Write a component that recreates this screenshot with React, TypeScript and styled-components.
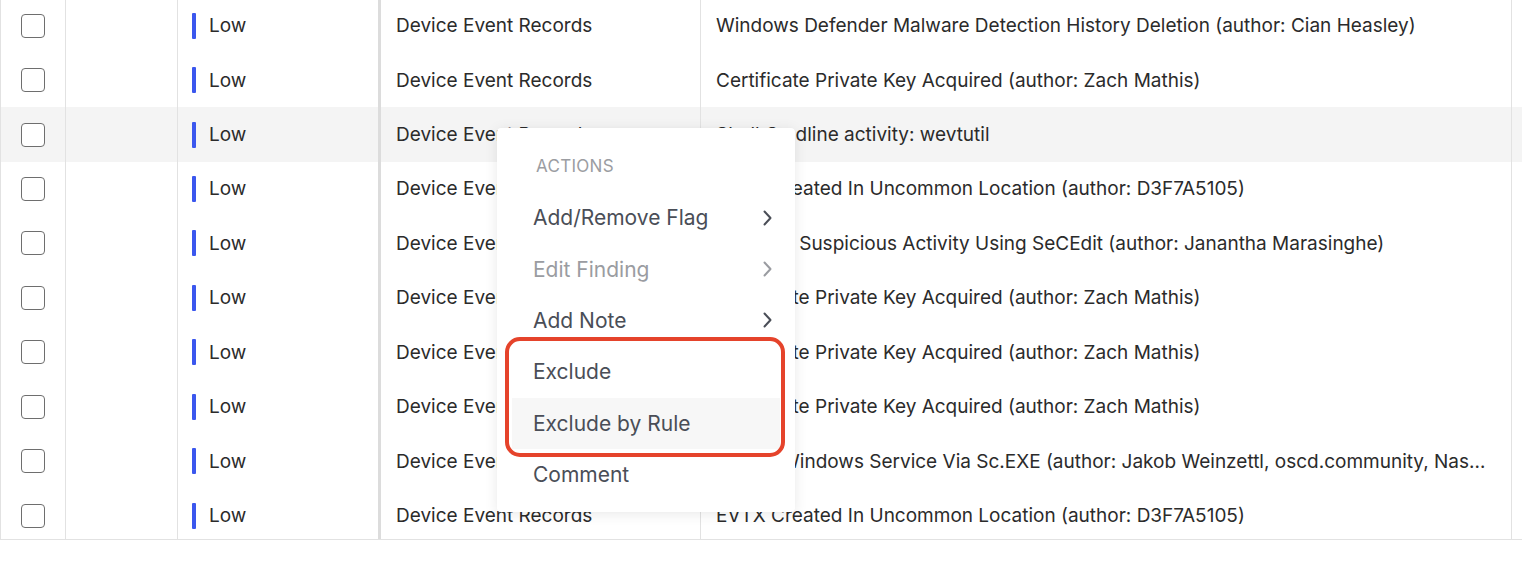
import styled, { createGlobalStyle } from 'styled-components';

const GlobalStyle = createGlobalStyle`
  html, body {
    margin: 0;
    padding: 0;
    background: #ffffff;
    overflow: hidden;
  }
  body {
    font-family: Inter, "Noto Sans", "Liberation Sans", sans-serif;
    -webkit-font-smoothing: antialiased;
  }
`;

type Finding = {
  severity: string;
  source: string;
  title: string;
};

const rows: Finding[] = [
  { severity: 'Low', source: 'Device Event Records', title: 'Windows Defender Malware Detection History Deletion (author: Cian Heasley)' },
  { severity: 'Low', source: 'Device Event Records', title: 'Certificate Private Key Acquired (author: Zach Mathis)' },
  { severity: 'Low', source: 'Device Event Records', title: 'Shell Cmdline activity: wevtutil' },
  { severity: 'Low', source: 'Device Event Records', title: 'EVTX Created In Uncommon Location (author: D3F7A5105)' },
  { severity: 'Low', source: 'Device Event Records', title: 'Potential Suspicious Activity Using SeCEdit (author: Janantha Marasinghe)' },
  { severity: 'Low', source: 'Device Event Records', title: 'Certificate Private Key Acquired (author: Zach Mathis)' },
  { severity: 'Low', source: 'Device Event Records', title: 'Certificate Private Key Acquired (author: Zach Mathis)' },
  { severity: 'Low', source: 'Device Event Records', title: 'Certificate Private Key Acquired (author: Zach Mathis)' },
  { severity: 'Low', source: 'Device Event Records', title: 'Create Windows Service Via Sc.EXE (author: Jakob Weinzettl, oscd.community, Nasreddine Bencherchali)' },
  { severity: 'Low', source: 'Device Event Records', title: 'EVTX Created In Uncommon Location (author: D3F7A5105)' },
];

const menuItems = [
  { label: 'Add/Remove Flag', sub: true, disabled: false },
  { label: 'Edit Finding', sub: true, disabled: true },
  { label: 'Add Note', sub: true, disabled: false },
  { label: 'Exclude', sub: false, disabled: false },
  { label: 'Exclude by Rule', sub: false, disabled: false, hover: true },
  { label: 'Comment', sub: false, disabled: false },
];

const Chevron = ({ muted }: { muted?: boolean }) => (
  <svg width="11" height="16" viewBox="0 0 11 16" fill="none">
    <path
      d="M2.5 1.5 L8.5 8 L2.5 14.5"
      stroke={muted ? '#9a9ca1' : '#4a4e57'}
      strokeWidth="2"
      strokeLinecap="round"
      strokeLinejoin="round"
    />
  </svg>
);

const App = () => {
  return (
    <>
      <GlobalStyle />
      <Page>
        <Scroller>
          <Table>
            {rows.map((r, i) => (
              <Row key={i} $active={i === 2}>
                <CheckCell>
                  <Checkbox />
                </CheckCell>
                <Cell />
                <SeverityCell>
                  <SeverityBar />
                  {r.severity}
                </SeverityCell>
                <SourceCell>{r.source}</SourceCell>
                <TitleCell>
                  <span>{r.title}</span>
                </TitleCell>
                <Cell />
              </Row>
            ))}
          </Table>
        </Scroller>

        <Menu>
          <MenuHeader>ACTIONS</MenuHeader>
          {menuItems.map((m) => (
            <MenuItem key={m.label} $disabled={m.disabled} $hover={!!m.hover}>
              {m.label}
              {m.sub && <Chevron muted={m.disabled} />}
            </MenuItem>
          ))}
          <Highlight />
        </Menu>
      </Page>
    </>
  );
};

const Page = styled.div`
  position: relative;
  width: 1522px;
  height: 564px;
  overflow: hidden;
`;

const Scroller = styled.div`
  width: 1600px;
  height: 539px;
  overflow: hidden;
  border-left: 1px solid #e2e2e2;
  border-bottom: 1px solid #e2e2e2;
`;

const Table = styled.div`
  margin-top: -1.6px;
  display: flex;
  flex-direction: column;
`;

const Row = styled.div<{ $active: boolean }>`
  display: grid;
  grid-template-columns: 65px 112px 203px 320px 811px 1fr;
  height: 54.45px;
  flex-shrink: 0;
  background: ${(p) => (p.$active ? '#f4f4f4' : '#ffffff')};
  color: #2b2b2b;
  font-size: 19px;
`;

const Cell = styled.div`
  display: flex;
  align-items: center;
  min-width: 0;
  border-right: 1px solid #e2e2e2;
`;

const CheckCell = styled(Cell)`
  justify-content: center;
`;

const Checkbox = styled.div`
  width: 22px;
  height: 22px;
  border: 1.5px solid #6e6e6e;
  border-radius: 4px;
  background: #ffffff;
`;

const SeverityCell = styled(Cell)`
  padding-left: 14px;
  gap: 13px;
  border-right: 3px solid #dcdcdc;
`;

const SeverityBar = styled.div`
  width: 4px;
  height: 26px;
  background: #3b57ee;
  border-radius: 1px;
`;

const SourceCell = styled(Cell)`
  padding-left: 15px;
`;

const TitleCell = styled(Cell)`
  padding: 0 20px 0 15px;

  span {
    white-space: nowrap;
    overflow: hidden;
    text-overflow: ellipsis;
  }
`;

const Menu = styled.div`
  position: absolute;
  left: 497px;
  top: 128px;
  width: 298px;
  box-sizing: border-box;
  padding: 12px 15px 12px;
  background: #ffffff;
  border-radius: 4px;
  box-shadow: 0 2px 14px rgba(0, 0, 0, 0.09), 0 0 1px rgba(0, 0, 0, 0.05);
  display: flex;
  flex-direction: column;
`;

const MenuHeader = styled.div`
  height: 52px;
  display: flex;
  align-items: center;
  padding-left: 24px;
  font-size: 17px;
  color: #9b9da2;
  letter-spacing: 0.3px;
`;

const MenuItem = styled.div<{ $disabled: boolean; $hover: boolean }>`
  height: 51.4px;
  display: flex;
  align-items: center;
  justify-content: space-between;
  padding: 0 7px 0 21px;
  font-size: 21px;
  color: ${(p) => (p.$disabled ? '#9a9ca1' : '#4a4e57')};
  background: ${(p) => (p.$hover ? '#f7f7f7' : 'transparent')};
`;

const Highlight = styled.div`
  position: absolute;
  left: 8px;
  top: 209px;
  width: 280px;
  height: 120px;
  box-sizing: border-box;
  border: 4px solid #e5432b;
  border-radius: 15px;
  pointer-events: none;
`;

export default App;
